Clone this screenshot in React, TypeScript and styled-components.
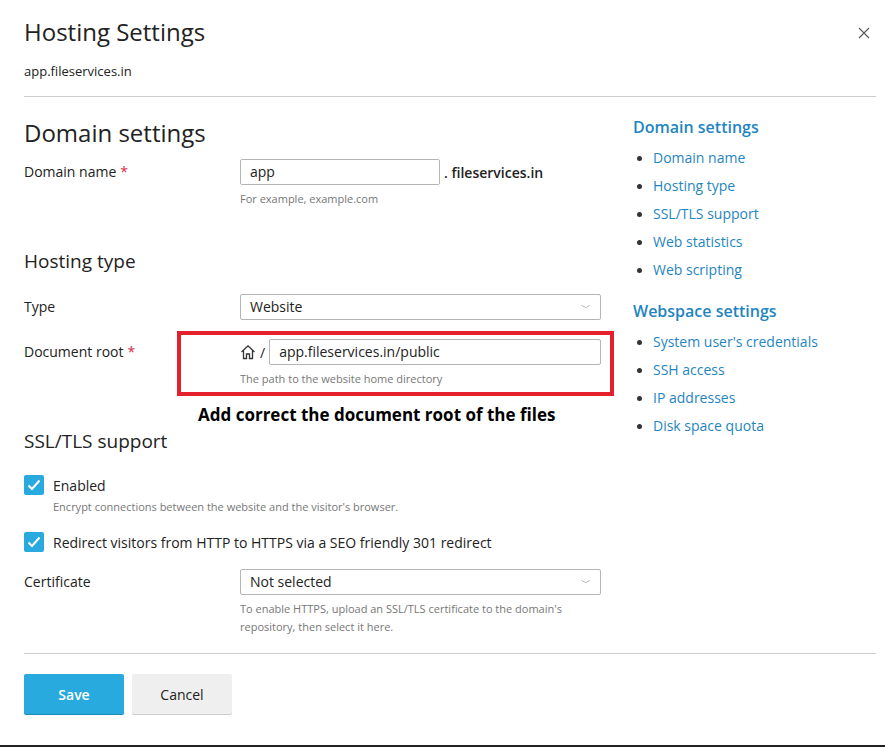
import React from "react";
import styled, { createGlobalStyle } from "styled-components";

const Global = createGlobalStyle`
  html, body { margin: 0; padding: 0; background: #fff; }
  body { font-family: "Open Sans", "Noto Sans", sans-serif; color: #222; width: 885px; height: 747px; overflow: hidden; }
`;

const Page = styled.div`
  position: relative; height: 747px; box-sizing: border-box; padding: 0 9px 0 24px;
`;
const Header = styled.div`
  display: flex; justify-content: space-between; align-items: flex-start; padding-top: 16px;
`;
const Title = styled.h1`
  margin: 0; font-weight: 400; font-size: 24px; line-height: 32px; color: #222;
`;
const Sub = styled.div`font-size: 13px; margin-top: 14px; line-height: 18px;`;
const Rule = styled.hr`border: 0; border-top: 1px solid #ccc; margin: ${p => p.$mt}px 0 0;`;
const Body = styled.div`display: flex; gap: 33px;`;
const Main = styled.div`width: 576px; position: relative;`;
const Side = styled.div`padding-top: 19px; flex: 1;`;
const H2 = styled.h2`margin: 20px 0 0; font-weight: 400; font-size: 24px; line-height: 32px;`;
const H3 = styled.h3`margin: ${p => p.$mt}px 0 0; font-weight: 400; font-size: 19px; line-height: 26px;`;
const Row = styled.div`display: grid; grid-template-columns: 216px 1fr; margin-top: ${p => p.$mt}px;`;
const Label = styled.div`font-size: 14px; line-height: 26px;`;
const Req = styled.span`color: #d02d4a; margin-left: 4px;`;
const Field = styled.div`display: flex; flex-direction: column;`;
const Line = styled.div`display: flex; align-items: center; gap: 4px;`;
const Input = styled.div`
  box-sizing: border-box; height: 26px; width: ${p => p.$w}; border: 1px solid #b5b5b5; border-radius: 2px;
  font-size: 14px; line-height: 24px; padding: 0 9px; display: flex; justify-content: space-between; align-items: center;
  color: #222;
`;
const Suffix = styled.span`font-size: 14px; font-weight: 600;`;
const Hint = styled.div`font-size: 11px; color: #777; line-height: 18px; margin-top: 5px;`;
const Chev = styled.span`color: #888; font-size: 10px;`;
const CheckRow = styled.div`display: flex; align-items: center; gap: 9px; margin-top: ${p => p.$mt}px; font-size: 14px;`;
const Box = styled.div`width: 20px; height: 20px; background: #28aade; border-radius: 2px; display: flex; align-items: center; justify-content: center;`;
const CheckHint = styled.div`font-size: 11px; color: #777; margin: 4px 0 0 29px;`;
const Footer = styled.div`display: flex; gap: 8px; margin-top: 20px;`;
const Btn = styled.button`
  height: 40px; width: 100px; border: 0; border-radius: 2px; font-family: inherit; font-size: 14px;
  background: ${p => p.$primary ? "#28aade" : "#efefef"}; color: ${p => p.$primary ? "#fff" : "#222"};
  font-weight: ${p => p.$primary ? 600 : 400};
  box-shadow: 0 1px 0 ${p => p.$primary ? "#1f8bb8" : "#ccc"};
`;
const SideTitle = styled.div`font-size: 16px; font-weight: 600; color: #1f85bf; line-height: 22px; margin-top: ${p => p.$mt}px;`;
const List = styled.ul`margin: 6px 0 0; padding: 0 0 0 20px; list-style: none;`;
const Item = styled.li`
  font-size: 14px; line-height: 28px; color: #1f85bf; position: relative;
  &::before { content: ""; position: absolute; left: -16px; top: 12px; width: 5px; height: 5px; border-radius: 50%; background: #333; }
`;
const RedBox = styled.div`
  position: absolute; left: 153px; top: 234px; width: 437px; height: 65px; box-sizing: border-box; border: 4px solid #e3202c;
`;
const Note = styled.div`
  position: absolute; left: 174px; top: 306px; font-size: 17px; font-weight: 700; color: #000;
`;
const BottomBar = styled.div`
  position: absolute; left: 0; right: 0; bottom: 0; height: 2px; background: #222;
`;

const Check = () => (
  <svg width="14" height="12" viewBox="0 0 14 12"><path d="M1.5 6.5 L5 10 L12.5 1.5" stroke="#fff" strokeWidth="2" fill="none" /></svg>
);
const Home = () => (
  <svg width="16" height="16" viewBox="0 0 16 16" fill="none" stroke="#333" strokeWidth="1.3">
    <path d="M1.5 8 L8 1.8 L14.5 8 M3.5 6.5 V14.5 H6.5 V10 H9.5 V14.5 H12.5 V6.5" />
  </svg>
);
const CloseIcon = () => (
  <svg width="12" height="12" viewBox="0 0 12 12" style={{ marginTop: 11, marginRight: 6 }}>
    <path d="M1 1 L11 11 M11 1 L1 11" stroke="#555" strokeWidth="1.1" />
  </svg>
);

export default function App() {
  return (
    <Page>
      <Global />
      <Header><Title>Hosting Settings</Title><CloseIcon /></Header>
      <Sub>app.fileservices.in</Sub>
      <Rule $mt={16} />
      <Body>
        <Main>
          <H2>Domain settings</H2>
          <Row $mt={10}>
            <Label>Domain name<Req>*</Req></Label>
            <Field>
              <Line><Input $w="200px">app</Input><Suffix>. fileservices.in</Suffix></Line>
              <Hint>For example, example.com</Hint>
            </Field>
          </Row>
          <H3 $mt={40}>Hosting type</H3>
          <Row $mt={20}>
            <Label>Type</Label>
            <Input $w="361px">Website<Chev>﹀</Chev></Input>
          </Row>
          <Row $mt={19}>
            <Label>Document root<Req>*</Req></Label>
            <Field>
              <Line><Home /><span style={{ fontSize: 14 }}>/</span><Input $w="332px">app.fileservices.in/public</Input></Line>
              <Hint>The path to the website home directory</Hint>
            </Field>
          </Row>
          <RedBox />
          <Note>Add correct the document root of the files</Note>
          <H3 $mt={40}>SSL/TLS support</H3>
          <CheckRow $mt={21}><Box><Check /></Box>Enabled</CheckRow>
          <CheckHint>Encrypt connections between the website and the visitor's browser.</CheckHint>
          <CheckRow $mt={18}><Box><Check /></Box>Redirect visitors from HTTP to HTTPS via a SEO friendly 301 redirect</CheckRow>
          <Row $mt={17}>
            <Label>Certificate</Label>
            <Field>
              <Input $w="361px">Not selected<Chev>﹀</Chev></Input>
              <Hint>To enable HTTPS, upload an SSL/TLS certificate to the domain's repository, then select it here.</Hint>
            </Field>
          </Row>
        </Main>
        <Side>
          <SideTitle $mt={0}>Domain settings</SideTitle>
          <List>
            {["Domain name", "Hosting type", "SSL/TLS support", "Web statistics", "Web scripting"].map(t => <Item key={t}>{t}</Item>)}
          </List>
          <SideTitle $mt={16}>Webspace settings</SideTitle>
          <List>
            {["System user's credentials", "SSH access", "IP addresses", "Disk space quota"].map(t => <Item key={t}>{t}</Item>)}
          </List>
        </Side>
      </Body>
      <Rule $mt={17} />
      <Footer><Btn $primary>Save</Btn><Btn>Cancel</Btn></Footer>
      <BottomBar />
    </Page>
  );
}
